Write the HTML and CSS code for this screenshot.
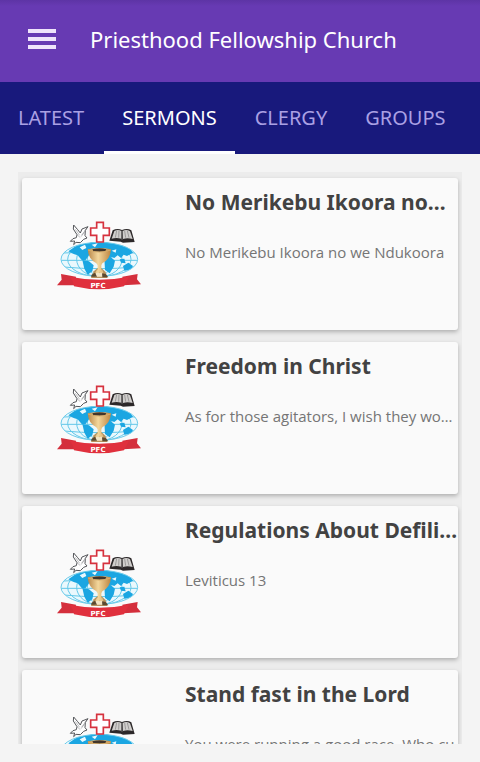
FILE: index.html
```html
<!DOCTYPE html>
<html lang="en">
<head>
<meta charset="utf-8">
<meta name="viewport" content="width=device-width, initial-scale=1">
<title>Priesthood Fellowship Church</title>
<link rel="stylesheet" href="styles.css">
</head>
<body>
<svg class="defs" aria-hidden="true">
  <defs>
    <linearGradient id="gold" x1="0" x2="1" y1="0" y2="0">
      <stop offset="0" stop-color="#b88648"/>
      <stop offset=".45" stop-color="#f3d79c"/>
      <stop offset="1" stop-color="#bd8440"/>
    </linearGradient>
    <clipPath id="globe-clip"><ellipse cx="151" cy="148" rx="115" ry="51"/></clipPath>
    <symbol id="logo" viewBox="0 -3 300 270">
      <g clip-path="url(#globe-clip)">
        <rect x="36" y="96" width="230" height="104" fill="#eaf8fd"/>
        <g fill="none" stroke="#62c7e8" stroke-width="3">
          <ellipse cx="151" cy="148" rx="95" ry="52"/>
          <ellipse cx="151" cy="148" rx="68" ry="52"/>
          <ellipse cx="151" cy="148" rx="36" ry="52"/>
          <path d="M36 151H266M44 129Q151 121 258 129M44 171Q151 181 258 171"/>
        </g>
        <path fill="#1ba6e2" d="M58 124 84 106 104 95H204L222 101 242 114 252 128 234 138 224 134 216 144 206 136 196 144 184 140 172 148 158 134 128 126 120 136 110 150 98 150 86 136 74 132ZM100 150 120 154 134 166 130 184 116 194 106 176ZM166 144 184 140 198 152 194 170 182 190 168 180ZM212 148 226 146 230 160 216 158ZM222 168 238 158 252 168 244 180 226 182Z"/>
        <path fill="#e8f8fd" d="M92 112 108 104 112 114 100 120ZM128 104 146 100 138 112ZM188 122 202 118 200 128Z"/>
      </g>
      <ellipse cx="151" cy="148" rx="115" ry="51" fill="none" stroke="#6bcbea" stroke-width="3"/>
      <path fill="#fff" stroke="#54565a" stroke-width="3" stroke-linejoin="round" d="M64 94 72 86 82 83 84 74 73 57 74 45 86 59 94 69 99 57 117 50 109 61 108 77 114 84 104 88 94 98 81 97 74 104 77 93Z"/>
      <path fill="none" stroke="#7c7e82" stroke-width="1.5" d="M79 58 92 76M83 73 94 83M112 57 98 75M106 67 96 80"/>
      <path fill="#fff" stroke="#d6323e" stroke-width="5" d="M143 37H163V54H181V76H163V96H143V76H125V54H143Z"/>
      <path fill="#2c2829" d="M181 92 191 61Q205 53 219 60 235 53 247 61L257 96 222 98 215 95Z"/>
      <path fill="#d0cecc" d="M188 86 196 63Q207 57 217 63V86Q202 82 188 86ZM221 63Q233 57 243 64L251 87Q235 82 222 87Z"/>
      <path fill="none" stroke="#817e7f" stroke-width="2" d="M203 62 199 83M210 62 209 83M227 63 230 83M235 62 240 83M219 62V90"/>
      <path fill="#b8935d" d="M134 184 146 174H157L170 186 175 204H126Z"/>
      <path fill="#f2e4c4" d="M144 180 151 190 160 181 163 200H137Z"/>
      <path fill="#5c4931" d="M128 194 138 188 144 200H126ZM159 190 170 192 178 202H160Z"/>
      <path fill="url(#gold)" d="M116 118Q151 110 186 118 184 148 160 160L157 166V178L164 188H138L146 178V166L142 160Q118 148 116 118Z"/>
      <path fill="#42362b" d="M130 118Q151 111 172 118L168 125H134Z"/>
      <path fill="none" stroke="#d7ad6b" stroke-width="3" d="M117 120Q151 132 185 120"/>
      <path fill="#d42f3c" d="M36 192 81 200 78 226 24 226 38 209ZM266 192 220 200 223 226 276 223 264 208Z"/>
      <path fill="#e0303d" d="M62 200Q151 218 240 200L225 229Q151 247 75 229L71 214Z"/>
      <text class="logo-text" x="147" y="233" text-anchor="middle">PFC</text>
    </symbol>
  </defs>
</svg>

<div class="app">
  <header class="bar">
    <button class="menu" type="button" aria-label="Menu">
      <svg viewBox="0 0 28 20" width="28" height="20" aria-hidden="true">
        <path fill="#efe4fb" d="M0 0H28V4H0ZM0 8H28V12H0ZM0 16H28V20H0Z"/>
      </svg>
    </button>
    <h1 class="app-name">Priesthood Fellowship Church</h1>
  </header>

  <nav class="tabs">
    <a class="tab" href="#latest">LATEST</a>
    <a class="tab active" href="#sermons" aria-current="page">SERMONS</a>
    <a class="tab" href="#clergy">CLERGY</a>
    <a class="tab" href="#groups">GROUPS</a>
  </nav>

  <main class="content">
    <div class="list">
      <article class="card">
        <svg class="logo" aria-hidden="true"><use href="#logo"/></svg>
        <div class="text">
          <h2 class="title">No Merikebu Ikoora no…</h2>
          <p class="summary">No Merikebu Ikoora no we Ndukoora</p>
        </div>
      </article>
      <article class="card">
        <svg class="logo" aria-hidden="true"><use href="#logo"/></svg>
        <div class="text">
          <h2 class="title">Freedom in Christ</h2>
          <p class="summary">As for those agitators, I wish they wo…</p>
        </div>
      </article>
      <article class="card">
        <svg class="logo" aria-hidden="true"><use href="#logo"/></svg>
        <div class="text">
          <h2 class="title">Regulations About Defili…</h2>
          <p class="summary">Leviticus 13</p>
        </div>
      </article>
      <article class="card">
        <svg class="logo" aria-hidden="true"><use href="#logo"/></svg>
        <div class="text">
          <h2 class="title">Stand fast in the Lord</h2>
          <p class="summary">You were running a good race. Who cu…</p>
        </div>
      </article>
    </div>
  </main>
</div>
</body>
</html>
```

FILE: styles.css
```css
* {
  box-sizing: border-box;
}

body {
  margin: 0;
  background: #f4f4f4;
  color: #424242;
  font-family: "Noto Sans", sans-serif;
}

h1,
h2,
p {
  margin: 0;
}

.defs {
  position: absolute;
  width: 0;
  height: 0;
}

.app {
  display: flex;
  flex-direction: column;
  height: 100vh;
}

.bar {
  display: flex;
  flex: none;
  align-items: center;
  gap: 24px;
  height: 82px;
  padding: 0 18px 4px;
  background: linear-gradient(#5d34a5, #673ab3 6px);
}

.menu {
  display: flex;
  padding: 10px;
  border: 0;
  background: none;
}

.app-name {
  color: #fff;
  font-size: 22px;
  font-weight: 400;
  line-height: 32px;
  white-space: nowrap;
}

.tabs {
  display: flex;
  flex: none;
  gap: 2px;
  height: 72px;
  background: #18197c;
}

.tab {
  display: flex;
  align-items: center;
  padding: 1px 18px 0;
  border-bottom: 3px solid transparent;
  color: #aaa0e4;
  font-size: 20px;
  text-decoration: none;
}

.tab.active {
  border-color: #fff;
  color: #fff;
}

.content {
  display: flex;
  flex: 1;
  min-height: 0;
  padding: 18px;
}

.list {
  display: flex;
  flex: 1;
  flex-direction: column;
  gap: 12px;
  min-width: 0;
  padding: 6px 4px;
  overflow: auto;
  scrollbar-width: none;
  background: #ececec;
}

.card {
  display: grid;
  flex: none;
  grid-template-columns: 154px 1fr;
  gap: 9px;
  min-height: 152px;
  border-radius: 3px;
  background: #fafafa;
  box-shadow: 0 2px 4px rgba(0, 0, 0, 0.26);
}

.logo {
  align-self: center;
  justify-self: center;
  width: 100px;
  height: 90px;
}

.logo-text {
  fill: #fff;
  font-family: "DejaVu Sans", sans-serif;
  font-size: 21px;
  font-weight: 700;
}

.text {
  display: flex;
  flex-direction: column;
  gap: 22px;
  min-width: 0;
  padding-top: 8px;
}

.title {
  font-size: 21px;
  font-weight: 700;
  line-height: 32px;
  white-space: nowrap;
}

.summary {
  color: #757575;
  font-family: "Open Sans", "Noto Sans", sans-serif;
  font-size: 15px;
  line-height: 24px;
  white-space: nowrap;
}
```
